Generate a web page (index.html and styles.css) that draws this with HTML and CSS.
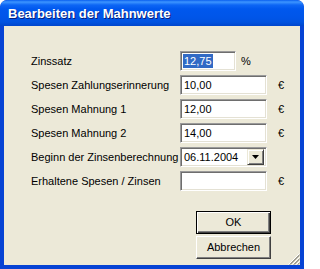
FILE: index.html
```html
<!DOCTYPE html>
<html>
<head>
<meta charset="utf-8">
<link rel="stylesheet" href="styles.css">
</head>
<body>
<div class="window">
  <div class="titlebar"><span class="title">Bearbeiten der Mahnwerte</span></div>
  <div class="client">
    <div class="form">
      <div class="row">
        <span class="label">Zinssatz</span>
        <div class="field short"><span class="sel">12,75</span></div>
        <span class="unit pct">%</span>
      </div>
      <div class="row">
        <span class="label">Spesen Zahlungserinnerung</span>
        <div class="field">10,00</div>
        <span class="unit">€</span>
      </div>
      <div class="row">
        <span class="label">Spesen Mahnung 1</span>
        <div class="field">12,00</div>
        <span class="unit">€</span>
      </div>
      <div class="row">
        <span class="label">Spesen Mahnung 2</span>
        <div class="field">14,00</div>
        <span class="unit">€</span>
      </div>
      <div class="row">
        <span class="label">Beginn der Zinsenberechnung</span>
        <div class="field combo"><span class="combo-text">06.11.2004</span><span class="drop"><svg width="7" height="4" viewBox="0 0 7 4"><path d="M0 0H7L3.5 4Z" fill="#000"/></svg></span></div>
      </div>
      <div class="row">
        <span class="label">Erhaltene Spesen / Zinsen</span>
        <div class="field"></div>
        <span class="unit">€</span>
      </div>
    </div>
    <div class="buttons">
      <div class="btn default"><span class="btn-in">OK</span></div>
      <div class="btn"><span class="btn-in">Abbrechen</span></div>
    </div>
    <svg class="grip" width="13" height="13" viewBox="0 0 13 13">
      <g stroke-width="1">
        <path d="M12.5 1.5L1.5 12.5M12.5 5.5L5.5 12.5M12.5 9.5L9.5 12.5" stroke="#fff"/>
        <path d="M12.5 2.5L2.5 12.5M12.5 3.5L3.5 12.5M12.5 6.5L6.5 12.5M12.5 7.5L7.5 12.5M12.5 10.5L10.5 12.5M12.5 11.5L11.5 12.5" stroke="#a19f92"/>
      </g>
    </svg>
  </div>
</div>
</body>
</html>
```

FILE: styles.css
```css
html, body {
  margin: 0;
  padding: 0;
  background: #ffffff;
}
.window {
  width: 304px;
  height: 269px;
  box-sizing: border-box;
  background: #0643d4;
  border-radius: 7px 7px 0 0;
  display: flex;
  flex-direction: column;
  font-family: "Liberation Sans", Arial, sans-serif;
  font-size: 11px;
  color: #000;
  overflow: hidden;
}
.titlebar {
  height: 26px;
  flex: none;
  display: flex;
  align-items: center;
  padding-left: 8px;
  background: linear-gradient(to bottom, #0a5fef 0px, #3d95ff 2px, #0d66f5 5px, #0058ee 9px, #0055e8 18px, #0053e0 22px, #0046cc 26px);
  border-radius: 7px 7px 0 0;
}
.title {
  color: #fff;
  font-family: "Liberation Sans", Arial, sans-serif;
  font-weight: bold;
  font-size: 13px;
  text-shadow: 1px 1px 0 #0a1e7a;
  margin-top: 1px;
}
.client {
  flex: 1;
  margin: 0 4px 4px 4px;
  background: #ece9d8;
  position: relative;
  padding: 25px 0 0 27px;
  box-sizing: border-box;
}
.form {
  display: flex;
  flex-direction: column;
  gap: 4px;
}
.row {
  display: flex;
  align-items: center;
  height: 20px;
}
.label {
  width: 149px;
  flex: none;
  white-space: nowrap;
  overflow: visible;
}
.field {
  width: 87px;
  height: 20px;
  box-sizing: border-box;
  flex: none;
  background: #fff;
  border-top: 1px solid #9a9a9a;
  border-left: 1px solid #9a9a9a;
  border-right: 1px solid #ffffff;
  border-bottom: 1px solid #ffffff;
  box-shadow: inset 1px 1px 0 #6e6e6e, inset -1px -1px 0 #e4e1d4;
  padding: 0 0 0 3px;
  line-height: 18px;
  position: relative;
}
.field.short {
  width: 56px;
  padding-left: 2px;
}
.sel {
  background: #316ac5;
  color: #fff;
  display: inline-block;
  line-height: 14px;
  padding: 0 1px;
  margin-top: 2px;
  vertical-align: top;
}
.unit {
  margin-left: 11px;
}
.unit.pct {
  margin-left: 5px;
}
.combo {
  display: flex;
  align-items: center;
  justify-content: space-between;
  padding-right: 2px;
}
.drop {
  width: 17px;
  height: 16px;
  box-sizing: border-box;
  background: #ece9d8;
  border-top: 1px solid #ece9d8;
  border-left: 1px solid #ece9d8;
  border-right: 1px solid #404040;
  border-bottom: 1px solid #404040;
  box-shadow: inset 1px 1px 0 #fff, inset -1px -1px 0 #808080;
  display: flex;
  align-items: center;
  justify-content: center;
}
.buttons {
  margin: 20px 0 0 165px;
  display: flex;
  flex-direction: column;
  gap: 2px;
  width: 75px;
}
.btn {
  width: 75px;
  height: 23px;
  box-sizing: border-box;
  background: #ece9d8;
  border-top: 1px solid #ffffff;
  border-left: 1px solid #ffffff;
  border-right: 1px solid #404040;
  border-bottom: 1px solid #404040;
  box-shadow: inset -1px -1px 0 #808080;
  display: flex;
  align-items: center;
  justify-content: center;
}
.btn.default {
  border: 1px solid #000;
  box-shadow: inset 1px 1px 0 #fff, inset -1px -1px 0 #404040, inset -2px -2px 0 #808080;
}
.btn-in {
  line-height: 13px;
}
.grip {
  position: absolute;
  right: 0;
  bottom: 0;
}
```
